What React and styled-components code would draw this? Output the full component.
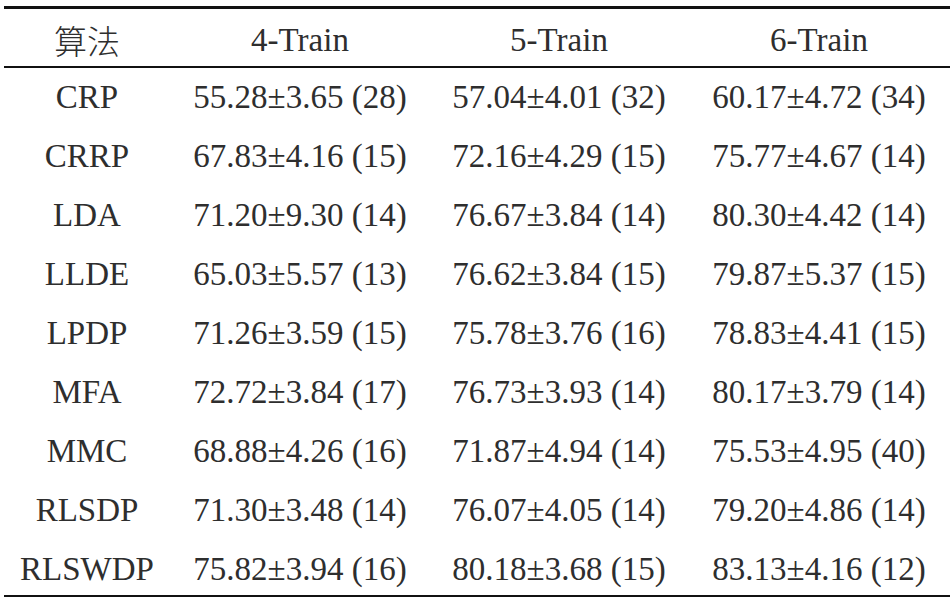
import React from 'react';
import styled, { createGlobalStyle } from 'styled-components';

const GlobalStyle = createGlobalStyle`
  html, body {
    margin: 0;
    padding: 0;
    background: #ffffff;
  }
  body {
    font-family: "Liberation Serif", "Noto Sans CJK SC", serif;
    color: #2e2e2e;
  }
`;

const rows = [
  ['CRP', '55.28±3.65 (28)', '57.04±4.01 (32)', '60.17±4.72 (34)'],
  ['CRRP', '67.83±4.16 (15)', '72.16±4.29 (15)', '75.77±4.67 (14)'],
  ['LDA', '71.20±9.30 (14)', '76.67±3.84 (14)', '80.30±4.42 (14)'],
  ['LLDE', '65.03±5.57 (13)', '76.62±3.84 (15)', '79.87±5.37 (15)'],
  ['LPDP', '71.26±3.59 (15)', '75.78±3.76 (16)', '78.83±4.41 (15)'],
  ['MFA', '72.72±3.84 (17)', '76.73±3.93 (14)', '80.17±3.79 (14)'],
  ['MMC', '68.88±4.26 (16)', '71.87±4.94 (14)', '75.53±4.95 (40)'],
  ['RLSDP', '71.30±3.48 (14)', '76.07±4.05 (14)', '79.20±4.86 (14)'],
  ['RLSWDP', '75.82±3.94 (16)', '80.18±3.68 (15)', '83.13±4.16 (12)'],
];

const Table = styled.table`
  margin: 6px 0 0 4px;
  width: 946px;
  border-collapse: separate;
  border-spacing: 0;
  table-layout: fixed;
  font-family: "Liberation Serif", "Noto Sans CJK SC", serif;
  font-size: 33px;
  line-height: 33px;
  color: #2e2e2e;
`;

const Col = styled.col`
  width: ${(p) => p.$w};
`;

const HeadCell = styled.th`
  text-align: center;
  white-space: nowrap;
  padding: 15px 0 9px;
  border-top: 3px solid #111;
  border-bottom: 2px solid #111;
  font-family: ${(p) =>
    p.$cjk ? '"Noto Sans CJK SC", "Liberation Serif", sans-serif' : '"Liberation Serif", serif'};
  font-weight: ${(p) => (p.$cjk ? 300 : 'normal')};
`;

const Row = styled.tr`
  &:last-child td {
    padding-bottom: 8.5px;
    border-bottom: 2px solid #111;
  }
`;

const Cell = styled.td`
  text-align: center;
  white-space: nowrap;
  padding: 13px 0;
  font-family: "Liberation Serif", serif;
`;

export default function App() {
  return (
    <>
      <GlobalStyle />
      <Table>
        <colgroup>
          <Col $w="166px" />
          <Col $w="260px" />
          <Col $w="258px" />
          <Col $w="262px" />
        </colgroup>
        <thead>
          <tr>
            <HeadCell $cjk>算法</HeadCell>
            <HeadCell>4-Train</HeadCell>
            <HeadCell>5-Train</HeadCell>
            <HeadCell>6-Train</HeadCell>
          </tr>
        </thead>
        <tbody>
          {rows.map((r) => (
            <Row key={r[0]}>
              {r.map((v, i) => (
                <Cell key={i}>{v}</Cell>
              ))}
            </Row>
          ))}
        </tbody>
      </Table>
    </>
  );
}
